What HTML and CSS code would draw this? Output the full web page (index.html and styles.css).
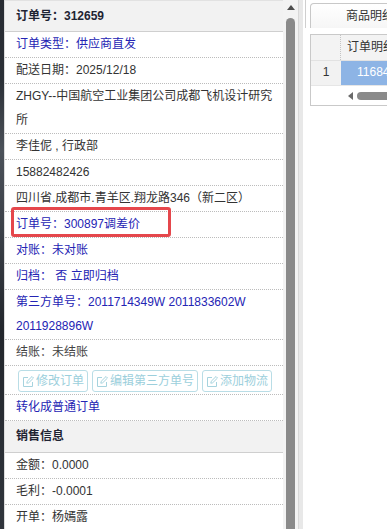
FILE: index.html
```html
<!DOCTYPE html>
<html lang="zh-CN">
<head>
<meta charset="utf-8">
<title>订单详情</title>
<link rel="stylesheet" href="styles.css">
</head>
<body>
<div class="app">
  <div class="edge"></div>
  <div class="panel">
    <div class="hd">订单号：312659</div>
    <div class="row blue">订单类型：供应商直发</div>
    <div class="row">配送日期：2025/12/18</div>
    <div class="row">ZHGY--中国航空工业集团公司成都飞机设计研究所</div>
    <div class="row">李佳伲 , 行政部</div>
    <div class="row">15882482426</div>
    <div class="row nowrap">四川省.成都市.青羊区.翔龙路346（新二区）</div>
    <div class="row blue mark">订单号：300897调差价<span class="redbox"></span></div>
    <div class="row blue">对账：未对账</div>
    <div class="row blue">归档：&nbsp;否 立即归档</div>
    <div class="row blue">第三方单号：2011714349W 2011833602W 2011928896W</div>
    <div class="row dark">结账：未结账</div>
    <div class="btns">
      <span class="btn"><svg class="ico" viewBox="0 0 12 12"><path d="M6 2.5H1.5v9h9V7" /><path d="M4.8 8.2l.4-1.9L10 1.5l1.5 1.5-4.8 4.8z" /></svg>修改订单</span>
      <span class="btn"><svg class="ico" viewBox="0 0 12 12"><path d="M6 2.5H1.5v9h9V7" /><path d="M4.8 8.2l.4-1.9L10 1.5l1.5 1.5-4.8 4.8z" /></svg>编辑第三方单号</span>
      <span class="btn"><svg class="ico" viewBox="0 0 12 12"><path d="M6 2.5H1.5v9h9V7" /><path d="M4.8 8.2l.4-1.9L10 1.5l1.5 1.5-4.8 4.8z" /></svg>添加物流</span>
    </div>
    <div class="row blue">转化成普通订单</div>
    <div class="hd hd2">销售信息</div>
    <div class="row">金额：0.0000</div>
    <div class="row">毛利：-0.0001</div>
    <div class="row">开单：杨嫣露</div>
  </div>
  <div class="vscroll"><div class="up"></div><div class="thumb"></div></div>
  <div class="divider"></div>
  <div class="right">
    <div class="tabbar"><div class="stub"></div><div class="tab">商品明细</div></div>
    <div class="grid">
      <div class="ghead"><div class="rn"></div><div class="hcell">订单明细</div></div>
      <div class="grow"><div class="rn rn1">1</div><div class="sel">116845</div></div>
      <div class="hs"><span class="larrow"></span><span class="hthumb"></span></div>
    </div>
  </div>
</div>
</body>
</html>
```
FILE: styles.css
```css
html, body {
  margin: 0;
  padding: 0;
}
body {
  width: 387px;
  height: 529px;
  overflow: hidden;
  background: #fff;
  font: 12px "Liberation Sans", "Noto Sans CJK SC", sans-serif;
  color: #333;
}
.app {
  display: flex;
  height: 529px;
}
.edge {
  width: 4px;
  flex: none;
  background: linear-gradient(#272b32 0, #2b3037 80px, #4b5159 150px, #3b4048 230px, #22262c 330px, #30353c 529px);
}
.panel {
  width: 278px;
  flex: none;
  border-left: 1px solid #dcdcdc;
}
.hd {
  height: 30px;
  line-height: 30px;
  border-top: 1px solid #e2e2e2;
  border-bottom: 1px solid #cfcfcf;
  background: #f2f2f2;
  font-weight: bold;
  color: #1f2433;
  padding-left: 11px;
}
.hd2 {
  border-top: none;
  height: 31px;
  line-height: 31px;
}
.row {
  padding: 0 3px 1px 11px;
  line-height: 24px;
  border-bottom: 1px dotted #bcbcbc;
}
.nowrap {
  white-space: nowrap;
}
.blue {
  color: #2424b4;
}
.dark {
  color: #444;
}
.mark {
  position: relative;
}
.redbox {
  position: absolute;
  left: 6px;
  top: -5px;
  width: 154px;
  height: 24px;
  border: 3px solid #e5474c;
  border-radius: 3px;
}
.btns {
  display: flex;
  gap: 4px;
  padding: 4px 0 2px 13px;
  border-bottom: 1px dotted #bcbcbc;
}
.btn {
  display: flex;
  align-items: center;
  gap: 2px;
  height: 20px;
  line-height: 20px;
  padding: 0 3px;
  border: 1px solid #b9dde6;
  border-radius: 3px;
  color: #9ccfdc;
}
.ico {
  width: 12px;
  height: 12px;
  fill: none;
  stroke: #a6d3de;
  stroke-width: 1;
}
.vscroll {
  width: 15px;
  flex: none;
  background: #f3f3f3;
  display: flex;
  flex-direction: column;
  align-items: center;
}
.up {
  margin-top: 5px;
  width: 0;
  height: 0;
  border-left: 4px solid transparent;
  border-right: 4px solid transparent;
  border-bottom: 5px solid #4e4e4e;
}
.thumb {
  margin-top: 8px;
  width: 9px;
  flex: 1;
  background: #8a8a8a;
  border-radius: 5px 5px 0 0;
}
.divider {
  width: 4px;
  flex: none;
  background: #e8e8e8;
  border-left: 1px solid #d8d8d8;
}
.right {
  flex: 1;
  min-width: 0;
  padding-left: 2px;
  overflow: hidden;
}
.tabbar {
  display: flex;
  height: 28px;
}
.stub {
  width: 4px;
  flex: none;
  border-left: 1px solid #cfcfcf;
}
.tab {
  flex: none;
  margin-top: 3px;
  width: 140px;
  height: 25px;
  line-height: 24px;
  padding-left: 35px;
  border: 1px solid #c8c8c8;
  border-bottom: none;
  border-radius: 4px 4px 0 0;
  background: linear-gradient(#ffffff, #f6f6f6);
  color: #333;
  box-sizing: border-box;
}
.grid {
  margin: 6px 0 0 5px;
  width: 220px;
  border: 1px solid #c9c9c9;
}
.ghead {
  display: flex;
  height: 25px;
  background: #f3f3f3;
}
.rn {
  width: 29px;
  flex: none;
  border-right: 1px dotted #c4c4c4;
  text-align: center;
}
.hcell {
  padding-left: 6px;
  line-height: 25px;
  color: #333;
}
.grow {
  display: flex;
  height: 24px;
  border-top: 1px solid #e2e2e2;
}
.rn1 {
  background: #f2f2f2;
  line-height: 23px;
  border-right: none;
  width: 30px;
}
.sel {
  flex: 1;
  background: #8db4e5;
  color: #fff;
  padding-left: 16px;
  line-height: 23px;
}
.hs {
  height: 19px;
  display: flex;
  align-items: center;
  border-top: 1px solid #e6e6e6;
  background: #fff;
}
.larrow {
  margin-left: 37px;
  width: 0;
  height: 0;
  border-top: 4px solid transparent;
  border-bottom: 4px solid transparent;
  border-right: 5px solid #6a6a6a;
}
.hthumb {
  margin-left: 4px;
  width: 120px;
  height: 8px;
  border-radius: 4px;
  background: #8a8a8a;
}
```
